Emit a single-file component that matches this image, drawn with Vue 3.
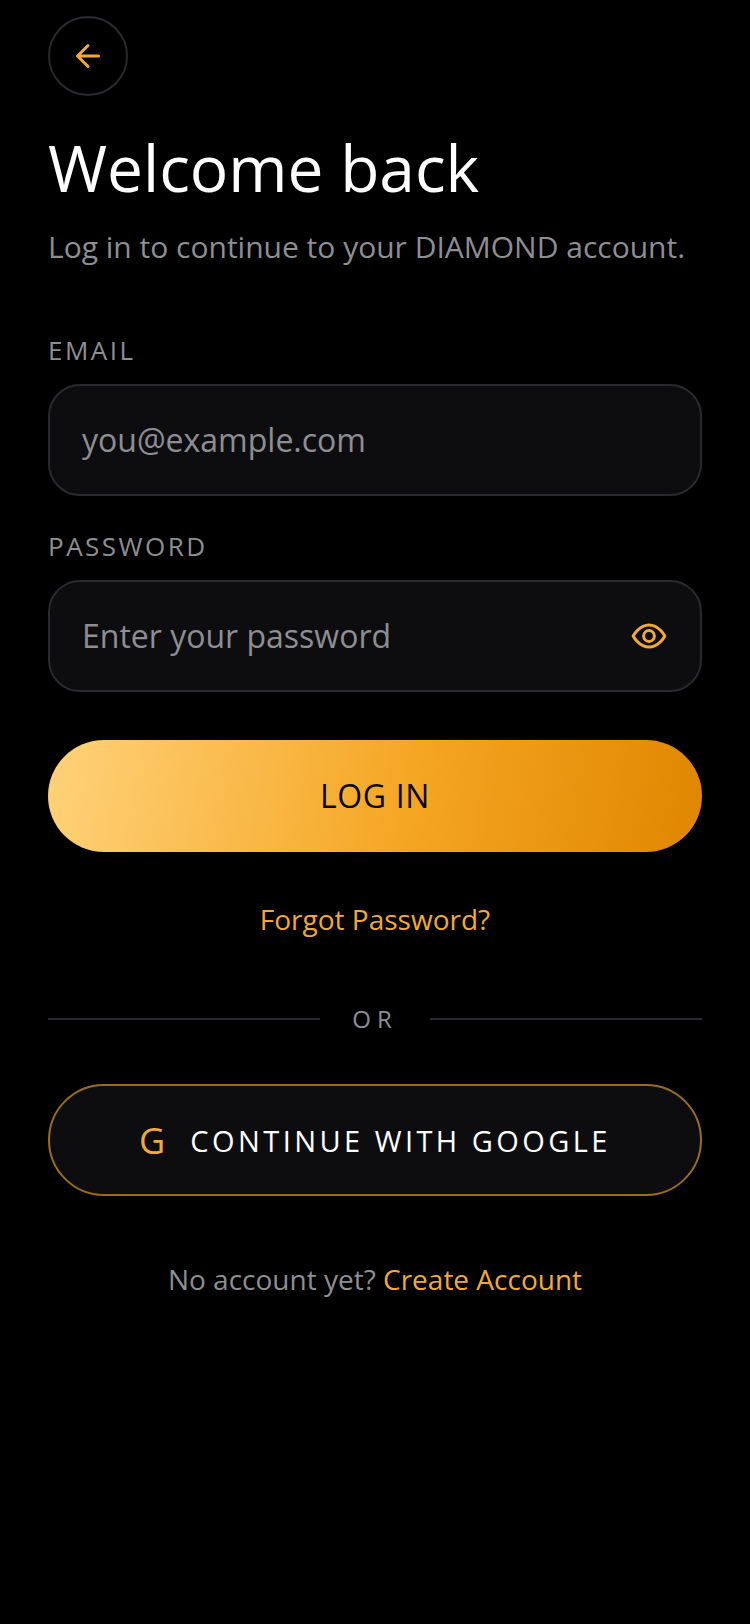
<script setup>
</script>

<template>
  <main class="page">
    <button class="back" aria-label="Back">
      <svg width="36" height="36" viewBox="0 0 24 24" fill="none" stroke="#f2aa35" stroke-width="2" stroke-linecap="round" stroke-linejoin="round">
        <path d="M19 12H5M12 19l-7-7 7-7" />
      </svg>
    </button>
    <h1 class="title">Welcome back</h1>
    <p class="subtitle">Log in to continue to your DIAMOND account.</p>

    <label class="label first">EMAIL</label>
    <div class="field"><span class="placeholder">you@example.com</span></div>

    <label class="label second">PASSWORD</label>
    <div class="field">
      <span class="placeholder">Enter your password</span>
      <svg class="eye" width="38" height="38" viewBox="0 0 24 24" fill="none" stroke="#f2aa35" stroke-width="1.9" stroke-linecap="round" stroke-linejoin="round">
        <path d="M2 12s3.6-7 10-7 10 7 10 7-3.6 7-10 7-10-7-10-7z" />
        <circle cx="12" cy="12" r="3.4" />
      </svg>
    </div>

    <button class="login">LOG IN</button>
    <a class="forgot">Forgot Password?</a>

    <div class="divider"><span class="line"></span><span class="or">OR</span><span class="line"></span></div>

    <button class="google"><span class="g">G</span><span>CONTINUE WITH GOOGLE</span></button>

    <p class="signup">No account yet? <a>Create Account</a></p>
  </main>
</template>

<style>
html, body { margin: 0; background: #000; }
</style>

<style scoped>
.page {
  box-sizing: border-box;
  width: 750px;
  height: 1624px;
  padding: 16px 48px 0;
  background: #000;
  font-family: "Open Sans", sans-serif;
  display: flex;
  flex-direction: column;
}
.back {
  box-sizing: border-box;
  width: 80px;
  height: 80px;
  border-radius: 50%;
  border: 2px solid #2a2a2e;
  background: transparent;
  padding: 0;
  display: flex;
  align-items: center;
  justify-content: center;
}
.title {
  margin: 32px 0 0;
  font-size: 64px;
  line-height: 80px;
  font-weight: 400;
  color: #fff;
}
.subtitle {
  margin: 18px 0 0;
  font-size: 30px;
  line-height: 42px;
  color: #8e8e93;
  white-space: nowrap;
}
.label {
  font-size: 26px;
  line-height: 32px;
  letter-spacing: 2.5px;
  color: #8e8e93;
}
.first { margin-top: 66px; }
.second { margin-top: 34px; }
.field {
  box-sizing: border-box;
  margin-top: 18px;
  height: 112px;
  border: 2px solid #2a2a2e;
  border-radius: 32px;
  background: #0d0d0f;
  padding: 0 32px;
  display: flex;
  align-items: center;
  justify-content: space-between;
}
.placeholder { font-size: 32px; color: #8e8e93; margin-bottom: 2px; }
.login {
  margin-top: 48px;
  height: 112px;
  border: 0;
  border-radius: 56px;
  padding: 0 0 2px;
  background: linear-gradient(100deg, #ffd27a 0%, #f5a623 55%, #e08600 100%);
  font-family: inherit;
  font-size: 32px;
  letter-spacing: 0.64px;
  color: #0a0a0a;
}
.forgot {
  margin-top: 48px;
  text-align: center;
  font-size: 28px;
  line-height: 38px;
  color: #f2aa35;
}
.divider {
  margin-top: 64px;
  display: flex;
  align-items: center;
  gap: 32px;
}
.line { flex: 1; height: 2px; background: #2a2a2e; }
.or { font-size: 24px; letter-spacing: 6px; color: #8e8e93; }
.google {
  box-sizing: border-box;
  margin-top: 49px;
  height: 112px;
  border: 2px solid #9a6c20;
  border-radius: 56px;
  background: #0d0d0f;
  font-family: inherit;
  font-size: 29px;
  letter-spacing: 3.45px;
  color: #fff;
  display: flex;
  align-items: center;
  justify-content: center;
  gap: 25px;
}
.g { font-size: 36px; color: #f2aa35; letter-spacing: 0; }
.signup {
  margin: 64px 0 0;
  text-align: center;
  font-size: 28px;
  line-height: 38px;
  color: #8e8e93;
}
.signup a { color: #f2aa35; }
</style>
